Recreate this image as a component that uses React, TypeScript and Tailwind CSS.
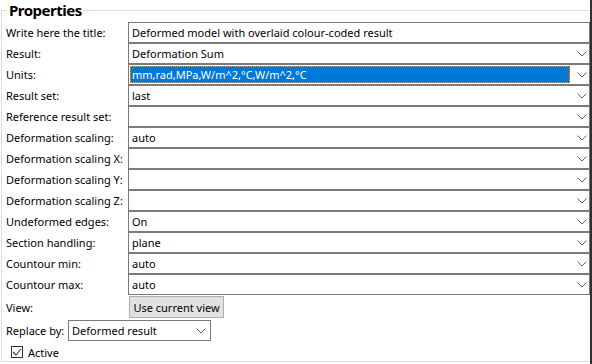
const rows: { label: string; value: string; select?: boolean; active?: boolean }[] = [
  { label: "Write here the title:", value: "Deformed model with overlaid colour-coded result" },
  { label: "Result:", value: "Deformation Sum", select: true },
  { label: "Units:", value: "mm,rad,MPa,W/m^2,°C,W/m^2,°C", select: true, active: true },
  { label: "Result set:", value: "last", select: true },
  { label: "Reference result set:", value: "", select: true },
  { label: "Deformation scaling:", value: "auto", select: true },
  { label: "Deformation scaling X:", value: "", select: true },
  { label: "Deformation scaling Y:", value: "", select: true },
  { label: "Deformation scaling Z:", value: "", select: true },
  { label: "Undeformed edges:", value: "On", select: true },
  { label: "Section handling:", value: "plane", select: true },
  { label: "Countour min:", value: "auto", select: true },
  { label: "Countour max:", value: "auto", select: true },
];

function Chevron() {
  return (
    <svg width="10" height="6" viewBox="0 0 10 6" className="shrink-0">
      <polyline points="0.5,0.5 5,5 9.5,0.5" fill="none" stroke="#606060" strokeWidth="1" />
    </svg>
  );
}

export default function App() {
  return (
    <div className="relative h-[364px] w-[592px] overflow-hidden bg-white text-[11px] leading-none text-black [font-family:'Noto_Sans',sans-serif]">
      <div className="absolute right-0 top-0 h-full w-[2px] bg-[#2e2f3a]" />
      <fieldset className="ml-[1px] h-[362px] w-[589px] border border-[#dcdcdc] pl-[4px]">
        <legend className="ml-[1px] px-[2px] text-[15px] font-bold leading-[20px] tracking-[-0.5px]">Properties</legend>
        <div className="mt-[2px] flex flex-col">
          {rows.map((r) => (
            <div key={r.label} className="flex h-[21px] items-center">
              <span className="w-[122px] shrink-0 whitespace-nowrap">{r.label}</span>
              <div className="flex h-[21px] w-[462px] items-center border border-[#7a7a7a] bg-white">
                {r.active ? (
                  <div className="ml-[1px] flex h-[17px] w-[440px] items-center border border-dotted border-[#f0a040] bg-[#0078d7] pl-[1px] text-white">
                    {r.value}
                  </div>
                ) : (
                  <span className="flex-1 pl-[3px]">{r.value}</span>
                )}
                {r.select && (
                  <div className="ml-auto flex w-[14px] justify-center">
                    <Chevron />
                  </div>
                )}
              </div>
            </div>
          ))}
          <div className="mt-[1px] flex h-[22px] items-center">
            <span className="w-[123px] shrink-0">View:</span>
            <button className="h-[22px] w-[95px] whitespace-nowrap border border-[#adadad] bg-[#e1e1e1] text-[11px]">Use current view</button>
          </div>
          <div className="mt-[2px] flex h-[21px] items-center">
            <span className="w-[62px] shrink-0 whitespace-nowrap">Replace by:</span>
            <div className="flex h-[21px] w-[143px] items-center border border-[#7a7a7a] pl-[3px]">
              <span className="flex-1 whitespace-nowrap">Deformed result</span>
              <div className="pr-[4px]">
                <Chevron />
              </div>
            </div>
          </div>
          <div className="mt-[5px] flex h-[12px] items-center pl-[5px]">
            <div className="flex h-[12px] w-[12px] items-center justify-center border border-[#333]">
              <svg width="10" height="8" viewBox="0 0 10 8">
                <polyline points="1,4 4,7 9,1" fill="none" stroke="#333" strokeWidth="1.1" />
              </svg>
            </div>
            <span className="ml-[5px]">Active</span>
          </div>
        </div>
      </fieldset>
    </div>
  );
}
